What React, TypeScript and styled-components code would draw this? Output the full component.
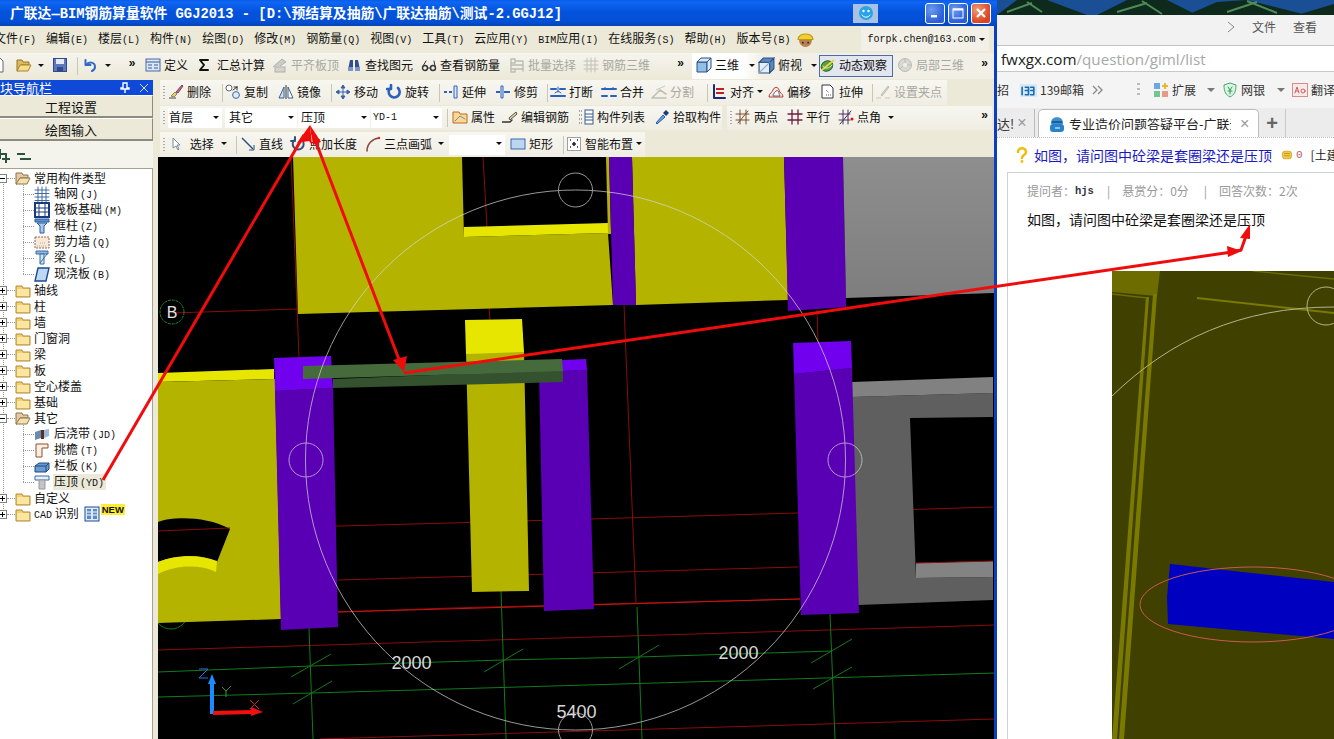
import React from "react";
import styled, { createGlobalStyle } from "styled-components";

const Global = createGlobalStyle`
  html, body { margin: 0; padding: 0; background: #fff; overflow: hidden; }
  body { font-family: "Noto Sans CJK SC", "Liberation Sans", sans-serif; font-size: 12px; }
  * { box-sizing: border-box; }
`;

const CJK = `"Noto Sans CJK SC", sans-serif`;
const MONO = `"Liberation Mono", "Noto Sans CJK SC", monospace`;

const Page = styled.div`
  position: relative;
  display: flex;
  width: 1334px;
  height: 739px;
  overflow: hidden;
`;
const AppWindow = styled.div`
  display: flex;
  flex-direction: column;
  flex: none;
  width: 997px;
  height: 739px;
  background: #ece9d8;
  border-right: 3px solid #0a3fc4;
  color: #111;
  line-height: 1;
  font-family: ${CJK};
`;
const TitleBar = styled.div`
  flex: none;
  display: flex;
  align-items: center;
  height: 26px;
  margin-right: -3px;
  padding-left: 10px;
  background: linear-gradient(180deg, #0a5be8 0%, #0e66f2 8%, #0453dc 45%, #0350d8 80%, #0346b8 100%);
  color: #fff;
  font: bold 13.8px ${MONO};
  white-space: pre;
`;
const TitleText = styled.span`
  flex: none;
  width: 843px;
  padding-bottom: 2px;
  overflow: hidden;
`;
const SmileButton = styled.div`
  flex: none;
  display: flex;
  align-items: center;
  justify-content: center;
  width: 25px;
  height: 19px;
  background: #a9c2e4;
`;
const WinButtons = styled.div`
  display: flex;
  gap: 3px;
  margin-left: 47px;
`;
const WinButton = styled.div<{ $close?: boolean }>`
  display: flex;
  align-items: center;
  justify-content: center;
  width: 20px;
  height: 21px;
  border: 1px solid #fff;
  border-radius: 3px;
  background: ${(p) =>
    p.$close
      ? "radial-gradient(circle at 30% 30%, #f09a7a, #d9461f 70%)"
      : "radial-gradient(circle at 30% 30%, #6d9bf0, #2a5fd8 70%)"};
`;
const MenuBar = styled.div`
  flex: none;
  display: flex;
  align-items: center;
  gap: 10px;
  height: 26px;
  overflow: hidden;
  white-space: nowrap;
`;
const MenuItem = styled.span<{ $lead?: boolean }>`
  flex: none;
  margin-left: ${(p) => (p.$lead ? "-6px" : "0")};
`;
const Key = styled.span<{ $ml?: number }>`
  margin-left: ${(p) => p.$ml ?? 0}px;
  font: 10px ${MONO};
`;
const HelmetSlot = styled.span`
  flex: none;
  display: flex;
  margin-left: -3px;
`;
const UserCombo = styled.div`
  flex: none;
  display: flex;
  align-items: center;
  justify-content: space-between;
  width: 128px;
  height: 24px;
  margin-left: 37px;
  padding: 0 4px 0 6px;
  background: #f3f1e7;
  font: 10px ${MONO};
`;
const Caret = styled.i<{ $ml?: number }>`
  flex: none;
  display: block;
  width: 0;
  height: 0;
  margin-left: ${(p) => p.$ml ?? 0}px;
  border-left: 3px solid transparent;
  border-right: 3px solid transparent;
  border-top: 3px solid #111;
`;
const MainBar = styled.div`
  flex: none;
  display: flex;
  align-items: center;
  height: 28px;
  overflow: hidden;
`;
const Section = styled.div<{ $w: number; $pl?: number; $light?: boolean }>`
  flex: none;
  display: flex;
  align-items: center;
  width: ${(p) => p.$w}px;
  height: 26px;
  padding-left: ${(p) => p.$pl ?? 0}px;
  background: ${(p) =>
    p.$light ? "linear-gradient(90deg,#fff 0,#fff 50px,#f2f0e6 70px)" : "linear-gradient(180deg,#f6f5ee,#ece9d8)"};
`;
const Tool = styled.div<{ $w: number; $off?: boolean; $active?: boolean; $ml?: number }>`
  flex: none;
  display: flex;
  align-items: center;
  gap: 3px;
  width: ${(p) => p.$w}px;
  height: 22px;
  margin-left: ${(p) => p.$ml ?? 0}px;
  padding-bottom: 2px;
  color: ${(p) => (p.$off ? "#a8a8a0" : "#111")};
  white-space: nowrap;
  ${(p) => p.$active && "border: 1px solid #4a6ea9; background: #e3e6ee;"}
`;
const Chevron = styled.span<{ $w: number }>`
  flex: none;
  width: ${(p) => p.$w}px;
  padding-bottom: 6px;
  font: bold 12px "Liberation Sans", sans-serif;
  text-align: center;
`;
const Icon = styled.svg`
  flex: none;
  display: block;
`;
const Sep = styled.div<{ $w: number }>`
  flex: none;
  width: ${(p) => p.$w}px;
  height: 18px;
  background: linear-gradient(#c9c6b4, #c9c6b4) center / 1px 100% no-repeat;
`;
const Workspace = styled.div`
  flex: 1;
  display: flex;
  min-height: 0;
`;
const Sidebar = styled.div`
  flex: none;
  display: flex;
  flex-direction: column;
  width: 153px;
`;
const PanelHead = styled.div`
  flex: none;
  display: flex;
  align-items: center;
  justify-content: space-between;
  height: 15px;
  padding-right: 5px;
  background: #0f49d8;
  color: #fff;
  font-size: 13px;
  white-space: nowrap;
`;
const HeadIcons = styled.div`
  display: flex;
  align-items: center;
  gap: 10px;
`;
const NavButton = styled.div`
  flex: none;
  display: flex;
  align-items: center;
  justify-content: center;
  height: 23px;
  padding-right: 10px;
  background: #ece9d8;
  border-top: 1px solid #fff;
  border-bottom: 2px solid #8d8b7f;
  border-right: 1px solid #8d8b7f;
  font-size: 13px;
`;
const TreeTools = styled.div`
  flex: none;
  display: flex;
  align-items: center;
  gap: 4px;
  height: 27px;
  margin-left: -5px;
  padding-top: 2px;
  background: #f5f4ec;
`;
const Tree = styled.div`
  position: relative;
  flex: 1;
  padding-top: 1px;
  background: #fff;
  border-top: 1px solid #a5a295;
  border-right: 1px solid #a5a295;
`;
const Guide = styled.div<{ $left: number; $top: number; $h: number }>`
  position: absolute;
  left: ${(p) => p.$left}px;
  top: ${(p) => p.$top}px;
  height: ${(p) => p.$h}px;
  border-left: 1px dotted #999;
`;
const Row = styled.div<{ $child?: boolean }>`
  position: relative;
  display: flex;
  align-items: center;
  gap: ${(p) => (p.$child ? 4 : 3)}px;
  height: 16px;
  padding-left: ${(p) => (p.$child ? 34 : 0)}px;
  white-space: nowrap;
  &::before {
    content: "";
    position: absolute;
    top: 8px;
    left: ${(p) => (p.$child ? 23 : 7)}px;
    width: ${(p) => (p.$child ? 11 : 8)}px;
    border-top: 1px dotted #999;
  }
`;
const Expander = styled.span`
  position: relative;
  flex: none;
  display: flex;
  align-items: center;
  justify-content: center;
  width: 9px;
  height: 9px;
  margin: 0 5px 0 -2px;
  background: #fff;
  border: 1px solid #808080;
  color: #000;
  z-index: 1;
`;
const RowLabel = styled.span<{ $sel?: boolean }>`
  padding: 1px 2px 1px 1px;
  margin-left: -1px;
  background: ${(p) => (p.$sel ? "#ece9d8" : "transparent")};
`;
const NewTag = styled.span`
  margin: -9px 0 0 -2px;
  padding: 0 1px;
  background: #ffee33;
  color: #111;
  font: bold 9.500px "Liberation Sans", sans-serif;
`;
const Main = styled.div`
  flex: 1;
  display: flex;
  flex-direction: column;
  min-width: 0;
  padding-left: 5px;
`;
const Band = styled.div<{ $h: number; $mb?: number }>`
  flex: none;
  display: flex;
  height: ${(p) => p.$h}px;
  margin-bottom: ${(p) => p.$mb ?? 0}px;
  margin-left: 2px;
  gap: 5px;
`;
const BandPart = styled.div<{ $w: number }>`
  flex: none;
  display: flex;
  align-items: center;
  width: ${(p) => p.$w}px;
  padding-left: 8px;
  background: linear-gradient(180deg, #f7f6f0, #f0eee3);
  &::before {
    content: "";
    flex: none;
    width: 2px;
    height: 14px;
    margin-left: -5px;
    margin-right: 3px;
    background: repeating-linear-gradient(180deg, #aaa 0 1px, transparent 1px 3px);
  }
`;
const Combo = styled.div<{ $w: number; $mr?: number; $pl?: number }>`
  flex: none;
  display: flex;
  align-items: center;
  justify-content: space-between;
  width: ${(p) => p.$w}px;
  height: 20px;
  margin-right: ${(p) => p.$mr ?? 0}px;
  padding: 0 3px 2px ${(p) => p.$pl ?? 1}px;
  background: #fff;
  white-space: nowrap;
`;
const MonoText = styled.span`
  font: 10px ${MONO};
`;
const Canvas = styled.div`
  flex: 1;
  min-height: 0;
  background: #000;
`;
const FullSvg = styled.svg`
  display: block;
  width: 100%;
  height: 100%;
`;
const Browser = styled.div`
  flex: 1;
  display: flex;
  flex-direction: column;
  min-width: 0;
  background: #fff;
  line-height: 1;
  font-family: ${CJK};
`;
const Wallpaper = styled.div`
  flex: none;
  height: 15px;
  background: #10386e;
`;
const BrowserTop = styled.div`
  flex: none;
  display: flex;
  align-items: center;
  justify-content: flex-end;
  gap: 17px;
  height: 31px;
  padding: 0 17px 6px 0;
  background: #f2f2f2;
  border-bottom: 1px solid #c4c4c4;
  color: #555;
`;
const AddressBar = styled.div`
  flex: none;
  display: flex;
  align-items: center;
  height: 26px;
  padding-left: 4px;
  border-bottom: 1px solid #c8c8c8;
  font: 15.2px "Open Sans", sans-serif;
  color: #222;
`;
const Faint = styled.span`
  color: #a8a8a8;
`;
const Bookmarks = styled.div`
  flex: none;
  display: flex;
  align-items: center;
  height: 36px;
  background: #f4f4f4;
  color: #333;
  white-space: nowrap;
  overflow: hidden;
  font-size: 12px;
`;
const BmItem = styled.div<{ $w: number }>`
  flex: none;
  display: flex;
  align-items: center;
  gap: 3px;
  width: ${(p) => p.$w}px;
`;
const GrayCaret = styled(Caret)`
  border-top: 4px solid #777;
  border-left-width: 4px;
  border-right-width: 4px;
`;
const TabStrip = styled.div`
  flex: none;
  display: flex;
  align-items: flex-end;
  height: 29px;
  background: #ececec;
  font-size: 13px;
  white-space: nowrap;
`;
const GhostTab = styled.div`
  flex: none;
  display: flex;
  align-items: center;
  gap: 3px;
  width: 38px;
  height: 28px;
  border-right: 1px solid #bbb;
  color: #333;
  margin-right: 3px;
`;
const ActiveTab = styled.div`
  flex: none;
  display: flex;
  align-items: center;
  width: 221px;
  height: 28px;
  padding-left: 10px;
  background: #fff;
  border: 1px solid #bdbdbd;
  border-bottom: none;
  border-radius: 5px 5px 0 0;
  color: #222;
`;
const TabTitle = styled.span`
  width: 162px;
  margin-left: 4px;
  overflow: hidden;
`;
const Close = styled.span<{ $ml?: number }>`
  margin-left: ${(p) => p.$ml ?? 0}px;
  color: #999;
  font: 16px "Liberation Sans", sans-serif;
`;
const Plus = styled.div`
  flex: none;
  display: flex;
  align-items: center;
  justify-content: center;
  width: 27px;
  height: 28px;
  border-right: 1px solid #c8c8c8;
  color: #666;
  font: bold 20px "Liberation Sans", sans-serif;
`;
const PageBody = styled.div`
  position: relative;
  flex: 1;
  min-height: 0;
  overflow: hidden;
  border-top: 1px dotted #bbb;
`;
const QuestionRow = styled.div`
  display: flex;
  align-items: center;
  height: 34px;
  padding-left: 17px;
  white-space: nowrap;
`;
const QuestionLink = styled.span`
  margin-left: 4px;
  margin-right: 9px;
  color: #1a1ac0;
  font-size: 14px;
`;
const Points = styled.span`
  margin-left: 3px;
  color: #b06060;
  font: 11px ${MONO};
`;
const Tag = styled.span`
  margin-left: 8px;
  color: #222;
`;
const Card = styled.div`
  margin-left: 10px;
  height: 600px;
  border-left: 1px solid #ccd2d6;
  border-top: 1px solid #ccd2d6;
  padding: 11px 0 0 19px;
`;
const Meta = styled.div`
  display: flex;
  align-items: center;
  height: 14px;
  color: #999;
  white-space: nowrap;
`;
const Asker = styled.b`
  margin-right: 13px;
  color: #334;
  font: bold 10.5px ${MONO};
`;
const Bar = styled.span`
  margin-right: 12px;
`;
const MetaGap = styled.span`
  margin-right: 15px;
`;
const Body = styled.div`
  margin-top: 14px;
  font-size: 14px;
  color: #111;
`;
const Shot = styled.div`
  width: 222px;
  height: 468px;
  margin: 45px 0 0 85px;
  background: #404000;
`;
const Arrows = styled.svg`
  position: absolute;
  left: 0;
  top: 0;
  width: 1334px;
  height: 739px;
  pointer-events: none;
`;

const s = { fill: "none", strokeLinecap: "round" as const, strokeLinejoin: "round" as const };
const G: Record<string, React.ReactNode> = {
  page: <path d="M3 1h8l3 3v11H3z" fill="#fff" stroke="#667" />,
  open: <><path d="M1 3h5l1 2h6v3H5l-3 6H1z" fill="#e2b95a" stroke="#94752c" /><path d="M4 8h11l-3 6H1z" fill="#f6dd8a" stroke="#a5852f" /></>,
  save: <><rect x="1.5" y="1.5" width="13" height="13" fill="#5d79bc" stroke="#2d4a8a" /><rect x="4" y="2" width="8" height="5" fill="#e4eaf6" /><rect x="5" y="10" width="6" height="5" fill="#2d4a8a" /></>,
  undo: <><path d="M3.500 3v5h5" {...s} stroke="#2f66c8" strokeWidth="2" /><path d="M4 8c3-4 9-3 9 2 0 2-1 3-3 4" {...s} stroke="#2f66c8" strokeWidth="2" /></>,
  define: <><rect x="1" y="2" width="14" height="12" fill="#dce6f6" stroke="#4a6aa8" /><path d="M1 5h14M3 8h4M3 11h4M9 8h4M9 11h4" stroke="#3a5a98" /></>,
  sigma: <path d="M10 3H2l4 5-4 5h8" {...s} stroke="#111" strokeWidth="2" />,
  level: <><path d="M1 10 10 2l4 3-6 4" fill="#ccc" stroke="#b0b0a8" /><rect x="3" y="10" width="10" height="5" fill="#d4d4cc" stroke="#b0b0a8" /></>,
  binoc: <><path d="M2 13 4 3h3v10zM9 13V3h3l2 10z" fill="#334c8c" /><rect x="2" y="10" width="5" height="4" fill="#7a94c8" /><rect x="9" y="10" width="5" height="4" fill="#7a94c8" /></>,
  glass: <><circle cx="4" cy="11" r="2.500" {...s} stroke="#333" strokeWidth="1.4" /><circle cx="12" cy="11" r="2.500" {...s} stroke="#333" strokeWidth="1.4" /><path d="M6.500 11h3M2 9l3-5M14 9l-1-5" {...s} stroke="#333" /></>,
  batch: <path d="M2 2h4v4H2zM6 4h8M6 8h8M6 12h8M2 8h4M2 12h4v3H2zM2 6v6M14 4v10" {...s} stroke="#bcbcb4" strokeWidth="1.4" />,
  rebar: <path d="M1 4h14M1 8h14M1 12h14M4 1v14M8 1v14M12 1v14" {...s} stroke="#c0c0b8" />,
  cube: <><path d="M1 5h10v10H1z" fill="#8fc0e8" stroke="#2e4f80" /><path d="M1 5l4-4h10l-4 4zM11 5l4-4v10l-4 4z" fill="#d4e8f8" stroke="#2e4f80" /></>,
  cube2: <><path d="M1 5h10v10H1z" fill="#e4eef8" stroke="#2e4f80" /><path d="M1 5l4-4h10l-4 4zM11 5l4-4v10l-4 4z" fill="#5a88c0" stroke="#2e4f80" /><path d="M1 15 11 5" stroke="#8ab" /></>,
  orbit: <><ellipse cx="7" cy="9" rx="6" ry="5" fill="#5aa03c" stroke="#2f6a28" transform="rotate(-25 7 9)" /><path d="M2 13 14 3" stroke="#e8d040" strokeWidth="2" /><path d="M3 9c2 3 6 3 9-1" {...s} stroke="#cfeec0" /></>,
  local: <><circle cx="8" cy="8" r="6.500" fill="#d8d8d0" stroke="#bbb" /><circle cx="8" cy="8" r="2" fill="#f0f0e8" /><path d="M8 2v4M14 8h-4M3 12l3-3" stroke="#bbb" /></>,
  brush: <><path d="M1 14h7" stroke="#444" /><path d="M3 12 7 8l2 2-3 3z" fill="#e8d070" stroke="#886" /><path d="M8 8 14 1l1 1-5 7z" fill="#c060c0" stroke="#844" /></>,
  copy: <><circle cx="4" cy="4" r="3" fill="#fff" stroke="#667" /><circle cx="11" cy="11" r="3.400" fill="#dfeaf8" stroke="#3a66a8" /><path d="M8 6l4-3M12 3h-3M12 3v3" {...s} stroke="#333" /></>,
  mirror: <><path d="M1 14 6 3v11z" fill="#cfe0f2" stroke="#3b5f90" /><path d="M15 14 10 3v11z" fill="#fff" stroke="#3b5f90" /><path d="M8 1v14" stroke="#333" /></>,
  move: <path d="M8 1v14M1 8h14M8 1 6 4h4zM8 15l-2-3h4zM1 8l3-2v4zM15 8l-3-2v4z" fill="#3a62a8" stroke="#3a62a8" />,
  rotate: <path d="M12 4a5.500 5.500 0 1 1-7-.5M5 1v4H1" {...s} stroke="#2a60c0" strokeWidth="2.600" />,
  extend: <><path d="M1 8h3M6 8h3" stroke="#2a60c0" strokeWidth="2" /><path d="M11 2h3v12h-3z" fill="#dfeaf8" stroke="#2a60c0" /></>,
  trim: <><path d="M1 8h4M9 8h6" stroke="#2a60c0" strokeWidth="2" /><path d="M6 2h2v12H6z" fill="#dfeaf8" stroke="#2a60c0" /></>,
  breakI: <><path d="M1 5h5M10 5h5M1 12h14" {...s} stroke="#2a60c0" strokeWidth="2" /><path d="M8 3v5M5 9l3-2 3 2" {...s} stroke="#2a60c0" /></>,
  merge: <><path d="M1 5h14M1 12h5M10 12h5" {...s} stroke="#2a60c0" strokeWidth="2" /><path d="M4 3v3M12 3v3" stroke="#2a60c0" /></>,
  split: <><path d="M1 14h14M1 14 9 6l6 4" {...s} stroke="#c0c0b8" strokeWidth="1.600" /><path d="M5 6l9-4" stroke="#c8c8c0" /></>,
  align: <><path d="M3 1v13h11" {...s} stroke="#1a2a7a" strokeWidth="2" /><path d="M5 5h8M5 9h8" stroke="#c02020" strokeWidth="2" /></>,
  offset: <><path d="M1 13c0-4 3-4 4-7s5-4 6 0 4 3 4 7z" fill="#fde8e0" stroke="#b04040" /><path d="M5 12c0-3 2-3 3-5 1-1 3 0 3 2s1 2 1 3z" fill="#fff" stroke="#606060" /></>,
  stretch: <><path d="M2 1h8l3 3v10H2z" fill="#fff" stroke="#334" /><path d="M6 6l3 3M6 11h5" stroke="#555" strokeDasharray="1 1" /></>,
  grip: <><path d="M1 14h5M10 14h5" stroke="#c8c8c0" /><path d="M6 11 13 2l1 1-7 9z" fill="#d4d4cc" stroke="#c0c0b8" /></>,
  props: <><path d="M1 3h6l1 2h7v9H1z" fill="#f6d89a" stroke="#c06a20" /><path d="M3 12l5-5 5 3" {...s} stroke="#888" /></>,
  edit: <><path d="M0 13h8l2-2" {...s} stroke="#333" strokeWidth="1.400" /><path d="M7 9 14 3l1 2-7 6z" fill="#e8cf9a" stroke="#554" /></>,
  list: <><rect x="7" y="1" width="8" height="14" fill="#fff" stroke="#3a5a8a" /><path d="M7 5h8M7 8h8M7 11h8" stroke="#3a5a8a" /><path d="M1 2h3M1 6h3M1 10h3M1 14h3" stroke="#556" strokeDasharray="1 1" /></>,
  pick: <><path d="M2 14 9 6l2 2-8 7z" fill="#6aa6e8" stroke="#2a5a9a" /><path d="M9 4l3-3 3 3-3 3z" fill="#1a3a7a" /></>,
  two: <path d="M1 5h13M1 11h13M5 1v14M11 1v14M3 14 13 2" {...s} stroke="#7a5030" />,
  par: <path d="M1 5h14M1 11h14M5 1v14M11 1v14" {...s} stroke="#6a2040" strokeWidth="1.300" />,
  ang: <><path d="M1 5h11M1 11h11M5 1v14M10 1v14M2 15 13 2" {...s} stroke="#4a3060" /><circle cx="14" cy="10" r="1.500" fill="#e01010" /></>,
  select: <path d="M5 2v10l3-2 2 4 1-1-2-4h3z" fill="#fff" stroke="#7a8aa0" />,
  line: <><path d="M2 2l11 11" stroke="#2a5080" strokeWidth="1.400" /><path d="M14 14H9M14 14V9" stroke="#2a5080" /></>,
  addlen: <path d="M12 4a5.500 5.500 0 1 1-7-.5M5 1v4H1" {...s} stroke="#34507c" strokeWidth="2" />,
  arc: <><path d="M2 15C2 8 7 3 14 2" {...s} stroke="#8a4a40" strokeWidth="1.600" /><circle cx="14" cy="2" r="1.200" fill="#c03030" /></>,
  rect: <rect x="1" y="3" width="14" height="10" fill="#bcd6f2" stroke="#3a6aa8" />,
  smart: <><rect x="1.500" y="1.500" width="13" height="13" fill="#fff" stroke="#445" strokeDasharray="1 1" /><path d="M4 4h1M11 4h1M4 11h1M11 11h1M8 6v4M6 8h4" stroke="#223" strokeWidth="1.600" /></>,
  folder: <><path d="M1 4h6l1 2h7v9H1z" fill="#f2cf70" stroke="#b08a3a" /><path d="M2 7h12v7H2z" fill="#fbe6a0" /></>,
  folderO: <><path d="M1 3h6l1 2h5v3H5l-3 6H1z" fill="#e6c9a0" stroke="#8a7450" /><path d="M5 8h10l-3 6H1z" fill="#f6e2a8" stroke="#8a7450" /></>,
  grid: <path d="M1 4h14M1 7.500h14M1 11h14M1 14.500h14M4 1v15M8 1v15M12 1v15" {...s} stroke="#3f6aa0" />,
  raft: <><rect x="1" y="1" width="14" height="14" fill="#fff" stroke="#1a3a80" strokeWidth="2" /><path d="M5 1v14M11 1v14M1 6h14M1 10h14" stroke="#1a3a80" /></>,
  column: <><path d="M1 1h14v3H1z" fill="#5a94d8" stroke="#2a5a9a" /><path d="M3 5h10l-3 3v7H6V8z" fill="#a8c8ec" stroke="#2a5a9a" /></>,
  wall: <><rect x="1" y="3" width="14" height="11" fill="#fae8d8" stroke="#9a6a4a" strokeDasharray="2 1" /><path d="M3 12h9M6 9h6" stroke="#aaa" strokeDasharray="1 1" /></>,
  beam: <><path d="M2 1h12v3H2z" fill="#8ab8e8" stroke="#3a6aa0" /><path d="M6 4h4v10H6z" fill="#cfe3f6" stroke="#3a6aa0" /><path d="M6 13 13 4" stroke="#3a6aa0" /></>,
  slab: <path d="M4 2h11l-3 13H1z" fill="#bcd8f4" stroke="#1a4a90" strokeWidth="1.400" />,
  pour: <><path d="M1 6l6-2v8l-6 2z" fill="#6a8ab0" /><path d="M7 4h3v9H7z" fill="#5a3020" /><path d="M10 4l5-1v7l-5 2z" fill="#9ab8d8" /></>,
  eave: <path d="M2 2h12v4H8v9H2z" fill="#fbeee0" stroke="#8a5030" />,
  rail: <path d="M1 8l4-3h10v6l-3 3H1z M1 8h11v6M12 8l3-3" fill="#6a9ad0" stroke="#1a4a80" />,
  cap: <><path d="M1 2h14v4H1z" fill="#e8f0f8" stroke="#3a6aa8" /><path d="M5 6h6v9H5z" fill="#c4c4c4" stroke="#999" /></>,
  cad: <><rect x="1" y="1" width="14" height="14" fill="#dfeaf8" stroke="#1a4a90" /><path d="M3 3h4v10H3zM9 3h4v10H9z" fill="#5a8ac8" /><path d="M3 6h4M3 9h4M9 6h4M9 9h4" stroke="#fff" /></>,
  smile: <><circle cx="8" cy="8" r="7" fill="#29a3e8" /><circle cx="5.500" cy="6" r="1.200" fill="#fff" /><circle cx="10.500" cy="6" r="1.200" fill="#fff" /><path d="M4 10c2 3 6 3 8 0" {...s} stroke="#fff" /></>,
  helmet: <><circle cx="8" cy="9" r="6" fill="#b98050" /><path d="M1 8C1 1 15 1 15 8z" fill="#f2cf30" stroke="#c09a10" /><circle cx="5.500" cy="11" r=".8" fill="#222" /><circle cx="10.500" cy="11" r=".8" fill="#222" /></>,
  ext: <><rect x="1" y="1" width="6" height="6" fill="#6aa6e8" /><rect x="1" y="9" width="6" height="6" fill="#72c690" /><rect x="9" y="9" width="6" height="6" fill="#e89a8a" /><path d="M12 1v6M9 4h6" stroke="#e8b830" strokeWidth="2" /></>,
  shield: <><path d="M8 1l6 2c0 7-2 10-6 12C4 13 2 10 2 3z" fill="#dff5e4" stroke="#40a868" /><path d="M6 5l2 3 2-3M8 8v4M6 9h4" {...s} stroke="#30985c" /></>,
  trans: <><rect x="0.500" y="1.500" width="15" height="13" fill="#fbe8e8" stroke="#d09090" /><path d="M3 11l2-6 2 6M4 9h2" {...s} stroke="#d06060" /><circle cx="11" cy="9" r="2" {...s} stroke="#d06060" /></>,
  m139: <><rect x="0" y="2" width="16" height="12" fill="#d4e8f8" /><path d="M2 5v7M5 5h3v7H5M5 8h3M10 5h3v7h-3M10 8h3" {...s} stroke="#1a6ab0" strokeWidth="1.500" /></>,
  ie: <><path d="M2 8C1 -1 15 -1 14 8z" fill="#3c8fd0" /><path d="M3 6h10" stroke="#16507e" strokeWidth="1.500" /><rect x="1" y="8" width="14" height="8" rx="3" fill="#2a82c8" /><path d="M6 12h5" stroke="#cfeeff" strokeWidth="1.200" /></>,
  help: <><path d="M4 5c0-5 8-5 8 0 0 3-4 3-4 6" {...s} stroke="#f0bc10" strokeWidth="2.600" /><circle cx="8" cy="14.500" r="1.400" fill="#f0bc10" /></>,
  coin: <><rect x="2" y="3" width="12" height="10" rx="3" fill="#f2cb40" stroke="#c89a20" /><path d="M4 6h8M4 9h8" stroke="#b88a20" /></>,
};
const Ic = ({ n, z = 16 }: { n: string; z?: number }) => (
  <Icon width={z} height={z} viewBox="0 0 16 16">{G[n]}</Icon>
);

type T = { i: string; t: string; w: number; off?: boolean; caret?: number };
const Tools = ({ items }: { items: (T | number)[] }) => (
  <>
    {items.map((it, k) =>
      typeof it === "number" ? (
        <Sep key={k} $w={it} />
      ) : (
        <Tool key={k} $w={it.w} $off={it.off}>
          <Ic n={it.i} />
          <span>{it.t}</span>
          {it.caret !== undefined && <Caret $ml={it.caret} />}
        </Tool>
      )
    )}
  </>
);

const menus: [string, string][] = [["文件", "(F)"], ["编辑", "(E)"], ["楼层", "(L)"], ["构件", "(N)"], ["绘图", "(D)"], ["修改", "(M)"], ["钢筋量", "(Q)"], ["视图", "(V)"], ["工具", "(T)"], ["云应用", "(Y)"]];
const menus2: [string, string][] = [["在线服务", "(S)"], ["帮助", "(H)"], ["版本号", "(B)"]];

const row2: (T | number)[] = [
  { i: "brush", t: "删除", w: 52 }, 5,
  { i: "copy", t: "复制", w: 53 }, { i: "mirror", t: "镜像", w: 50 }, 7,
  { i: "move", t: "移动", w: 51 }, { i: "rotate", t: "旋转", w: 50 }, 7,
  { i: "extend", t: "延伸", w: 52 }, { i: "trim", t: "修剪", w: 49 }, 6,
  { i: "breakI", t: "打断", w: 51 }, { i: "merge", t: "合并", w: 50 }, { i: "split", t: "分割", w: 52, off: true }, 8,
  { i: "align", t: "对齐", w: 57, caret: 0 }, { i: "offset", t: "偏移", w: 52 }, { i: "stretch", t: "拉伸", w: 50 }, 5,
  { i: "grip", t: "设置夹点", w: 70, off: true },
];
const row3b: (T | number)[] = [
  { i: "props", t: "属性", w: 50 }, { i: "edit", t: "编辑钢筋", w: 76 }, { i: "list", t: "构件列表", w: 76 }, { i: "pick", t: "拾取构件", w: 67 },
];
const row3c: (T | number)[] = [
  { i: "two", t: "两点", w: 52 }, { i: "par", t: "平行", w: 51 }, { i: "ang", t: "点角", w: 141, caret: 4 },
];

type N = { n: string; t: string; k?: string; child?: boolean; exp?: "plus" | "minus"; sel?: boolean };
const tree: N[] = [
  { n: "folderO", t: "常用构件类型", exp: "minus" },
  { n: "grid", t: "轴网", k: "(J)", child: true },
  { n: "raft", t: "筏板基础", k: "(M)", child: true },
  { n: "column", t: "框柱", k: "(Z)", child: true },
  { n: "wall", t: "剪力墙", k: "(Q)", child: true },
  { n: "beam", t: "梁", k: "(L)", child: true },
  { n: "slab", t: "现浇板", k: "(B)", child: true },
  { n: "folder", t: "轴线", exp: "plus" },
  { n: "folder", t: "柱", exp: "plus" },
  { n: "folder", t: "墙", exp: "plus" },
  { n: "folder", t: "门窗洞", exp: "plus" },
  { n: "folder", t: "梁", exp: "plus" },
  { n: "folder", t: "板", exp: "plus" },
  { n: "folder", t: "空心楼盖", exp: "plus" },
  { n: "folder", t: "基础", exp: "plus" },
  { n: "folderO", t: "其它", exp: "minus" },
  { n: "pour", t: "后浇带", k: "(JD)", child: true },
  { n: "eave", t: "挑檐", k: "(T)", child: true },
  { n: "rail", t: "栏板", k: "(K)", child: true },
  { n: "cap", t: "压顶", k: "(YD)", child: true, sel: true },
  { n: "folder", t: "自定义", exp: "plus" },
];

const ExpMark = ({ plus }: { plus: boolean }) => (
  <Icon width="7" height="7" viewBox="0 0 7 7">
    <path d={plus ? "M1 3.500h5M3.500 1v5" : "M1 3.500h5"} stroke="#000" />
  </Icon>
);

const P = ({ p, f }: { p: string; f: string }) => <polygon points={p} fill={f} />;
const OL = "#b4b400", YE = "#e6e600", PU = "#5a00b4", PB = "#7000ee";

const Scene = () => (
  <FullSvg viewBox="158 157 836 582">
    <defs>
      <linearGradient id="gr" x1="0" x2="0" y1="0" y2="1">
        <stop offset="0" stopColor="#8e8e8e" />
        <stop offset="1" stopColor="#7e7e7e" />
      </linearGradient>
    </defs>
    <g fill="none" stroke="#8a0c0c" strokeWidth="1">
      <path d="M291 157 299 357M172 313 297 309M483 157 487 227M489 308 490 320M624 305 636 603M817 310 818 342" />
      <path d="M158 531 450 523 798 513 993 507M338 580 798 567M338 612 450 608 800 599M158 650 996 625M320 739 994 719" />
    </g>
    <path d="M338 612 800 599" stroke="#cc1414" strokeWidth="1" />
    <g fill="none" stroke="#127a1c" strokeWidth="1">
      <path d="M309 628 313 739M501 591 506 739M637 607 642 739M830 613 835 739" />
      <path d="M158 672 311 666 503 660 638 657 832 651M158 697 312 693 450 689 996 673" />
      <path d="M291 677 331 654M293 704 332 681M484 672 523 649M619 669 659 645M811 663 852 639M813 689 852 667" />
    </g>
    <circle cx="171" cy="612" r="17" fill="none" stroke="#127a1c" />
    <P f={OL} p="293,157 462,157 464,237 608,233 613,305 298,314" />
    <P f={YE} p="464,227 608,223 608,233 464,237" />
    <P f={OL} p="606,157 609,157 611,234 608,234" />
    <P f={OL} p="632,157 784,157 788,300 636,305" />
    <P f={PU} p="609,157 632,157 636,305 613,305" />
    <P f={PU} p="784,157 843,157 846,298 846,307 788,311" />
    <P f="url(#gr)" p="843,157 994,157 994,293 846,298" />
    <P f={YE} p="158,373 274,369 274,379 158,382" />
    <P f={OL} p="158,382 275,379 281,619 158,623" />
    <path d="M158 522C170 517 205 515 230 529L217 562C200 553 175 555 158 562Z" fill="#000" />
    <path d="M158 531 230 528" stroke="#8a0c0c" />
    <path d="M158 562C175 555 200 554 217 561L216 572C200 564 175 565 158 574Z" fill={YE} />
    <P f={PU} p="275,391 333,388 338,627 281,630" />
    <P f={PB} p="274,358 331,356 333,388 275,391" />
    <P f={OL} p="466,352 524,352 529,591 472,592" />
    <P f={YE} p="465,320 522,319 524,352 466,354" />
    <P f={PU} p="539,372 587,370 594,609 544,611" />
    <P f={PB} p="539,361 586,359 587,370 539,372" />
    <P f="#5f5f5f" p="852,397 993,393 993,417 910,418 916,578 993,577 993,600 858,605" />
    <P f="#818181" p="852,382 993,377 993,393 852,397" />
    <P f="#838383" p="916,563 993,561 993,577 916,578" />
    <path d="M916 563 993 561" stroke="#8a0c0c" />
    <P f={PU} p="794,374 852,368 859,613 801,615" />
    <P f={PB} p="793,343 851,341 852,368 794,374" />
    <P f="#34522e" p="333,379 563,370 563,382 333,388" />
    <P f="#456a3c" p="303,366 562,359 563,371 303,379" />
    <g fill="none" stroke="#d8d8d8" strokeWidth="1" opacity=".7">
      <circle cx="575.500" cy="460" r="270" />
      <circle cx="575.500" cy="190" r="17" />
      <circle cx="306" cy="460" r="17" />
      <circle cx="845" cy="460" r="17" />
      <circle cx="575.500" cy="730" r="17" />
    </g>
    <circle cx="172" cy="312" r="12" fill="none" stroke="#1e8a2a" strokeDasharray="3 1" />
    <text x="172" y="318" fontSize="16" fill="#e6e6e6" textAnchor="middle" fontFamily="Liberation Sans">B</text>
    <g fill="#d8d8d8" fontSize="18" fontFamily="Liberation Sans" textAnchor="middle">
      <text x="411.500" y="669">2000</text>
      <text x="738.500" y="659">2000</text>
      <text x="576.500" y="718">5400</text>
    </g>
    <path d="M212 714V682" stroke="#1a8cff" strokeWidth="4" />
    <path d="M212 674l-4 10h8z" fill="#1a8cff" />
    <path d="M213 713 252 712" stroke="#f01010" strokeWidth="4" />
    <path d="M263 712l-12-5v9z" fill="#f01010" />
    <g fill="none" strokeWidth="1">
      <path d="M199 669h9l-9 9h9" stroke="#2a70e0" />
      <path d="M222 687l4 4 5-5M226 691v6" stroke="#2a9a3a" />
      <path d="M250 700l9 9M259 700l-9 9" stroke="#d02020" />
    </g>
  </FullSvg>
);

const Picture = () => (
  <FullSvg viewBox="1112 271 222 468">
    <P f="#6c6c00" p="1112,271 1160,271 1157,296 1112,292" />
    <P f="#404000" p="1112,294 1147,298 1143,330 1112,330" />
    <P f="#7a7a00" p="1146,297 1149,297 1117,739 1112,739" />
    <P f="#7a7a00" p="1153,294 1157,294 1124,739 1119,739" />
    <path d="M1112 294 1147 298M1253 271 1334 279" stroke="#6c6c00" strokeWidth="1.400" />
    <path d="M1197 298 1334 313" stroke="#7a7a00" strokeWidth="2" />
    <path d="M1112 396C1170 340 1240 307 1334 307" fill="none" stroke="#b4b48a" />
    <circle cx="1326" cy="306" r="19" fill="none" stroke="#b4b48a" />
    <P f="#0000c0" p="1170,564 1334,582 1334,639 1168,624 1167,597" />
    <ellipse cx="1253" cy="604.500" rx="113" ry="37.500" fill="none" stroke="#c85a50" strokeWidth="1" />
  </FullSvg>
);

export default function App() {
  return (
    <Page>
      <Global />
      <AppWindow>
        <TitleBar>
          <TitleText>广联达—BIM钢筋算量软件 GGJ2013 - [D:\预结算及抽筋\广联达抽筋\测试-2.GGJ12]</TitleText>
          <SmileButton><Ic n="smile" /></SmileButton>
          <WinButtons>
            <WinButton><Icon width="12" height="12" viewBox="0 0 12 12"><rect x="2" y="8" width="6" height="2.400" fill="#fff" /></Icon></WinButton>
            <WinButton><Icon width="12" height="12" viewBox="0 0 12 12"><rect x="1" y="2" width="10" height="9" fill="none" stroke="#fff" /><path d="M1 2.500h10" stroke="#fff" strokeWidth="2" /></Icon></WinButton>
            <WinButton $close><Icon width="12" height="12" viewBox="0 0 12 12"><path d="M2 2l8 8M10 2l-8 8" stroke="#fff" strokeWidth="2.200" /></Icon></WinButton>
          </WinButtons>
        </TitleBar>
        <MenuBar>
          {menus.map(([a, b], i) => (
            <MenuItem key={a} $lead={i === 0}>{a}<Key>{b}</Key></MenuItem>
          ))}
          <MenuItem><Key>BIM</Key>应用<Key>(I)</Key></MenuItem>
          {menus2.map(([a, b]) => (
            <MenuItem key={a}>{a}<Key>{b}</Key></MenuItem>
          ))}
          <HelmetSlot><Ic n="helmet" z={17} /></HelmetSlot>
          <UserCombo>forpk.chen@163.com<Caret /></UserCombo>
        </MenuBar>
        <MainBar>
          <Section $w={142}>
            <Tool $w={16} $ml={-11}><Ic n="page" /></Tool>
            <Tool $w={36} $ml={11}><Ic n="open" /><Caret $ml={3} /></Tool>
            <Tool $w={21}><Ic n="save" /></Tool>
            <Sep $w={9} />
            <Tool $w={44}><Ic n="undo" /><Caret $ml={4} /></Tool>
            <Chevron $w={12}>»</Chevron>
          </Section>
          <Section $w={550} $pl={3}>
            <Tools items={[
              { i: "define", t: "定义", w: 53 },
              { i: "sigma", t: "汇总计算", w: 74 },
              { i: "level", t: "平齐板顶", w: 74, off: true },
              { i: "binoc", t: "查找图元", w: 75 },
              { i: "glass", t: "查看钢筋量", w: 88 },
              { i: "batch", t: "批量选择", w: 74, off: true },
              { i: "rebar", t: "钢筋三维", w: 92, off: true },
            ]} />
            <Chevron $w={11}>»</Chevron>
          </Section>
          <Section $w={302} $pl={4} $light>
            <Tool $w={62}><Ic n="cube" /><span>三维</span><Caret $ml={7} /></Tool>
            <Tool $w={61}><Ic n="cube2" z={17} /><span>俯视</span><Caret $ml={6} /></Tool>
            <Tool $w={74} $active><Ic n="orbit" /><span>动态观察</span></Tool>
            <Tool $w={4} />
            <Tool $w={82} $off><Ic n="local" /><span>局部三维</span></Tool>
            <Chevron $w={11}>»</Chevron>
          </Section>
        </MainBar>
        <Workspace>
          <Sidebar>
            <PanelHead>
              <span>块导航栏</span>
              <HeadIcons>
                <Icon width="10" height="11" viewBox="0 0 10 11"><path d="M3 1h4v5h2v1H1V6h2zM5 7v4" fill="none" stroke="#fff" strokeWidth="1.400" /></Icon>
                <Icon width="8" height="8" viewBox="0 0 8 8"><path d="M0 0l8 8M8 0 0 8" stroke="#cfe0ff" /></Icon>
              </HeadIcons>
            </PanelHead>
            <NavButton>工程设置</NavButton>
            <NavButton>绘图输入</NavButton>
            <TreeTools>
              <Icon width="16" height="14" viewBox="0 0 16 14"><path d="M0 5h12M5 0v10M7 10h8M11 6v8" stroke="#2c5240" strokeWidth="2" /></Icon>
              <Icon width="16" height="14" viewBox="0 0 16 14"><path d="M2 5h8M5 10h11" stroke="#2c5240" strokeWidth="2" /></Icon>
            </TreeTools>
            <Tree>
              <Guide $left={3} $top={8} $h={336} />
              <Guide $left={23} $top={16} $h={89} />
              <Guide $left={23} $top={256} $h={57} />
              {tree.map((r, i) => (
                <Row key={i} $child={r.child}>
                  {r.exp && <Expander><ExpMark plus={r.exp === "plus"} /></Expander>}
                  <Ic n={r.n} />
                  <RowLabel $sel={r.sel}>{r.t}{r.k && <Key $ml={2}>{r.k}</Key>}</RowLabel>
                </Row>
              ))}
              <Row>
                <Expander><ExpMark plus /></Expander>
                <Ic n="folder" />
                <RowLabel><Key>CAD</Key>&nbsp;识别</RowLabel>
                <Ic n="cad" />
                <NewTag>NEW</NewTag>
              </Row>
            </Tree>
          </Sidebar>
          <Main>
            <Band $h={25} $mb={1}>
              <BandPart $w={787}><Tools items={row2} /></BandPart>
            </Band>
            <Band $h={24} $mb={2}>
              <BandPart $w={562}>
                <Combo $w={54} $mr={3}>首层<Caret /></Combo>
                <Combo $w={72} $mr={1} $pl={4}>其它<Caret /></Combo>
                <Combo $w={72} $mr={1} $pl={3}>压顶<Caret /></Combo>
                <Combo $w={71} $pl={2}><MonoText>YD-1</MonoText><Caret /></Combo>
                <Sep $w={10} />
                <Tools items={row3b} />
              </BandPart>
              <BandPart $w={265}><Tools items={row3c} /><Chevron $w={11}>»</Chevron></BandPart>
            </Band>
            <Band $h={25}>
              <BandPart $w={485}>
                <Tool $w={64}><Ic n="select" /><span>&nbsp;选择</span><Caret $ml={4} /></Tool>
                <Sep $w={8} />
                <Tools items={[
                  { i: "line", t: "直线", w: 50 },
                  { i: "addlen", t: "点加长度", w: 75 },
                  { i: "arc", t: "三点画弧", w: 84, caret: 3 },
                ]} />
                <Combo $w={56} $mr={5}><span /><Caret /></Combo>
                <Tools items={[{ i: "rect", t: "矩形", w: 50 }, 6]} />
                <Tool $w={78}><Ic n="smart" /><span>智能布置</span><Caret /></Tool>
              </BandPart>
            </Band>
            <Canvas><Scene /></Canvas>
          </Main>
        </Workspace>
      </AppWindow>
      <Browser>
        <Wallpaper>
          <FullSvg viewBox="0 0 337 15" preserveAspectRatio="none">
            <rect width="337" height="15" fill="#1a4f96" />
            <path d="M0 15 20 0h30l40 15zM100 15 130 0h40l30 15zM190 15 220 2l30-2 60 15zM300 15 337 4v11z" fill="#0d2a1c" />
            <path d="M10 12 35 3M45 12 30 2M120 12 150 3M165 14 145 1M230 12 260 2M280 13 250 1" stroke="#4f8a58" strokeWidth="2" />
          </FullSvg>
        </Wallpaper>
        <BrowserTop>
          <Icon width="8" height="12" viewBox="0 0 8 12"><path d="M1 1l6 5-6 5" fill="none" stroke="#888" /></Icon>
          <span>文件</span>
          <span>查看</span>
        </BrowserTop>
        <AddressBar>fwxgx.com<Faint>/question/giml/list</Faint></AddressBar>
        <Bookmarks>
          <BmItem $w={23}>招</BmItem>
          <BmItem $w={72}><Ic n="m139" z={17} /><span>139邮箱</span></BmItem>
          <BmItem $w={45}>
            <Icon width="12" height="10" viewBox="0 0 12 10"><path d="M1 1l4 4-4 4M6 1l4 4-4 4" fill="none" stroke="#888" strokeWidth="1.300" /></Icon>
          </BmItem>
          <BmItem $w={16}>
            <Icon width="3" height="14" viewBox="0 0 3 14"><path d="M1.500 0v14" stroke="#bbb" strokeWidth="3" strokeDasharray="2 3" /></Icon>
          </BmItem>
          <BmItem $w={69}><Ic n="ext" /><span>扩展</span><GrayCaret $ml={8} /></BmItem>
          <BmItem $w={70}><Ic n="shield" /><span>网银</span><GrayCaret $ml={9} /></BmItem>
          <BmItem $w={42}><Ic n="trans" /><span>翻译</span></BmItem>
        </Bookmarks>
        <TabStrip>
          <GhostTab><span>达!</span><Close>×</Close></GhostTab>
          <ActiveTab>
            <Ic n="ie" />
            <TabTitle>专业造价问题答疑平台-广联达服务新干线</TabTitle>
            <Close $ml={9}>×</Close>
          </ActiveTab>
          <Plus>+</Plus>
        </TabStrip>
        <PageBody>
          <QuestionRow>
            <Ic n="help" />
            <QuestionLink>如图，请问图中砼梁是套圈梁还是压顶</QuestionLink>
            <Ic n="coin" z={12} />
            <Points>0</Points>
            <Tag>[土建</Tag>
          </QuestionRow>
          <Card>
            <Meta>
              <span>提问者：</span><Asker>hjs</Asker><Bar>|</Bar>
              <MetaGap>悬赏分：0分</MetaGap><Bar>|</Bar>
              <span>回答次数：2次</span>
            </Meta>
            <Body>如图，请问图中砼梁是套圈梁还是压顶</Body>
            <Shot><Picture /></Shot>
          </Card>
        </PageBody>
      </Browser>
      <Arrows viewBox="0 0 1334 739">
        <g fill="none" stroke="#f00c0c" strokeWidth="3">
          <path d="M103 480 304 135" />
          <path d="M312 132 400 362" />
          <path d="M404 373 1232 252" />
          <path d="M1232 252 1241 250 1246 236" />
        </g>
        <g fill="#f00c0c">
          <path d="M310 125l-13 18 12-2 3 4zM310 125l3 20 8-3z" />
          <path d="M404 372 393 360 407 356z" />
          <path d="M1242 251 1227 246 1228 257z" />
          <path d="M1250 224 1240 238 1250 239z" />
        </g>
      </Arrows>
    </Page>
  );
}
